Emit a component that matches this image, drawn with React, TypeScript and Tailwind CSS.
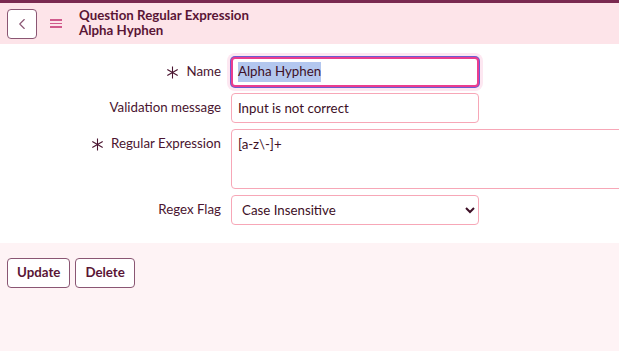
import { ChevronLeft } from "lucide-react";

function Asterisk() {
  return (
    <svg viewBox="0 0 12 12" className="mr-[7px] inline-block h-[13px] w-[13px]" aria-hidden>
      <path
        d="M6 0.5v11M1.2 3.2l9.6 5.6M10.8 3.2l-9.6 5.6"
        stroke="currentColor"
        strokeWidth="1"
        fill="none"
      />
    </svg>
  );
}

function Label({ children, required }: { children: string; required?: boolean }) {
  return (
    <div className="flex h-[30px] items-center justify-end whitespace-nowrap text-[13.3px] text-[#4a1530]">
      {required ? <Asterisk /> : null}
      {children}
    </div>
  );
}

const inputCls =
  "h-[30px] w-[248px] rounded-[4px] border border-[#f7a7b7] bg-white px-[6px] text-[13.3px] text-[#3d0f26] outline-none";

export default function App() {
  return (
    <div className="min-h-[351px] bg-[#fef3f5] font-['Lato','Noto_Sans',sans-serif]">
      <header className="flex h-[44px] items-center border-t-[3px] border-[#7a2950] bg-[#fde4e9]">
        <button
          type="button"
          className="ml-[7px] flex h-[30px] w-[30px] items-center justify-center rounded-[4px] border border-[#8a5673] bg-white text-[#8a5673]"
        >
          <ChevronLeft className="h-[18px] w-[18px]" strokeWidth={1.5} />
        </button>
        <span className="ml-[13px] flex w-[12px] flex-col gap-[2px]" aria-hidden>
          <span className="h-[1.5px] bg-[#d05a8c]" />
          <span className="h-[1.5px] bg-[#d05a8c]" />
          <span className="h-[1.5px] bg-[#d05a8c]" />
        </span>
        <h1 className="-mt-[2px] ml-[17px] flex flex-col text-[13.3px] font-bold leading-[14.5px] text-[#5a1535]">
          <span>Question Regular Expression</span>
          <span>Alpha Hyphen</span>
        </h1>
      </header>

      <section className="overflow-hidden bg-white pb-[18px] pt-[13px]">
        <div className="grid grid-cols-[221px_auto] gap-x-[10px] gap-y-[6px]">
          <Label required>Name</Label>
          <div className="flex h-[30px] w-[248px] items-center rounded-[4px] border-2 border-[#ea3d8f] bg-white px-[5px] text-[13.3px] text-[#3d0f26] shadow-[0_0_0_1px_#6b5bd2,0_0_0_4px_#fde7f1]">
            <span className="bg-[#b3c7ef]">Alpha Hyphen</span>
          </div>

          <Label>Validation message</Label>
          <input className={inputCls} defaultValue="Input is not correct" />

          <Label required>Regular Expression</Label>
          <textarea
            className="h-[60px] w-[420px] resize-none rounded-[4px] border border-[#f7a7b7] bg-white px-[6px] py-[5px] text-[13.3px] leading-[18px] text-[#3d0f26] outline-none"
            defaultValue="[a-z\-]+"
          />

          <Label>Regex Flag</Label>
          <select className={`${inputCls} px-[2px]`} defaultValue="ci">
            <option value="ci">Case Insensitive</option>
          </select>
        </div>
      </section>

      <div className="flex gap-[5px] px-[7px] pt-[15px]">
        <button
          type="button"
          className="h-[30px] rounded-[4px] border border-[#8a5673] bg-white px-[9px] text-[13.3px] font-bold text-[#5a1535]"
        >
          Update
        </button>
        <button
          type="button"
          className="h-[30px] rounded-[4px] border border-[#8a5673] bg-white px-[9px] text-[13.3px] font-bold text-[#5a1535]"
        >
          Delete
        </button>
      </div>
    </div>
  );
}
